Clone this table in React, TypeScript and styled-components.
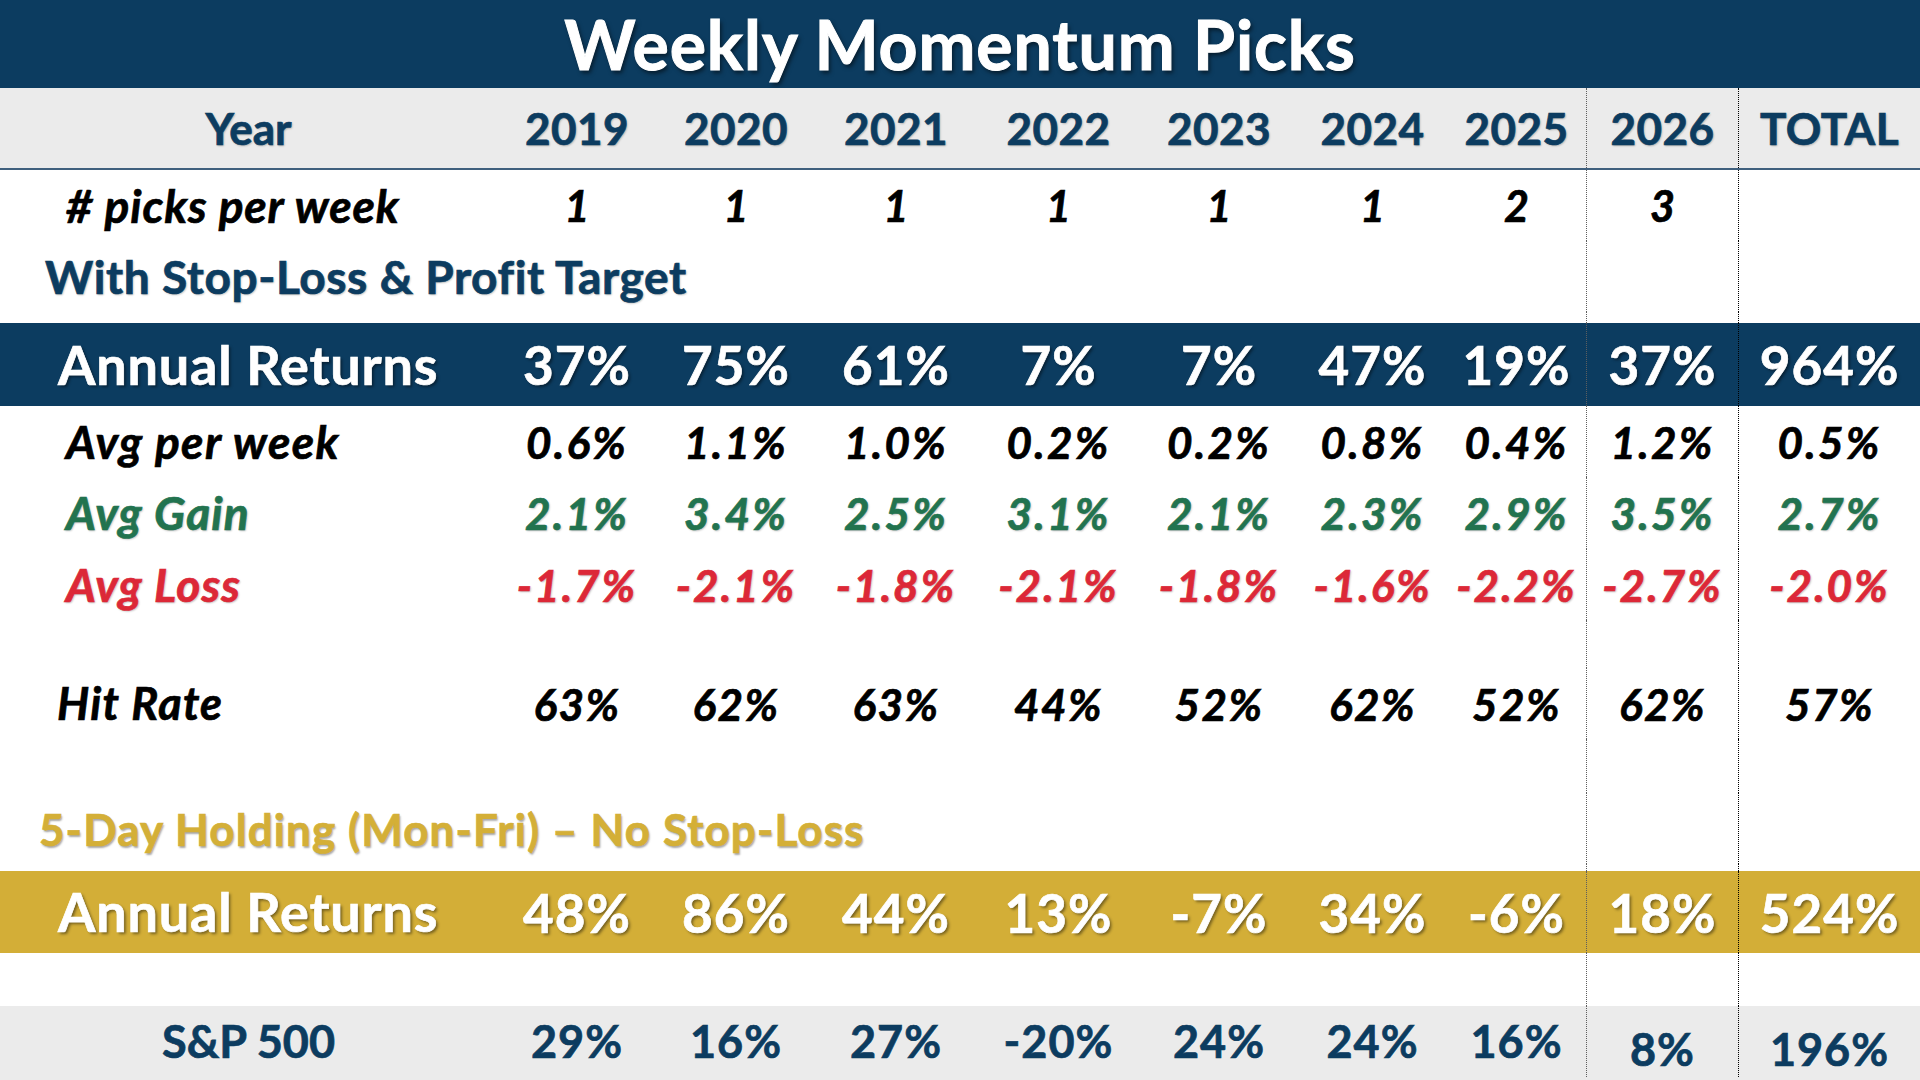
import React from 'react';
import styled, { createGlobalStyle } from 'styled-components';

const NAVY = '#0c3c60';
const GOLD = '#d3ae37';
const GREY = '#ebebeb';
const GREEN = '#22734f';
const RED = '#dc2837';

const COLS = '497px 160px 158px 162px 163px 158px 149px 139px 152px 182px';

const STRONG = '2px 2px 3px rgba(0,0,0,0.45)';
const SOFT = '1px 1px 2px rgba(0,0,0,0.28)';
const STROKE = '0.7px';

const GlobalStyle = createGlobalStyle`
  html, body { margin: 0; padding: 0; background: #ffffff; }
  body {
    font-family: Lato, "Open Sans", "Noto Sans", sans-serif;
    width: 1920px;
    height: 1080px;
    overflow: hidden;
  }
`;

const Page = styled.div`
  width: 1920px;
  height: 1080px;
  display: flex;
  flex-direction: column;
  background: #ffffff;
`;

const TitleBar = styled.h1`
  margin: 0;
  height: 88px;
  flex: 0 0 88px;
  background: ${NAVY};
  color: #ffffff;
  display: flex;
  align-items: center;
  justify-content: center;
  font-size: 68px;
  font-weight: 700;
  letter-spacing: 0.9px;
  -webkit-text-stroke: 1px #ffffff;
  line-height: 1;
  text-shadow: 2px 3px 4px rgba(0, 0, 0, 0.55);
`;

const Row = styled.div<{ $h: number; $bg?: string; $rule?: boolean; $padBottom?: number }>`
  display: grid;
  grid-template-columns: ${COLS};
  height: ${(p) => p.$h}px;
  flex: 0 0 ${(p) => p.$h}px;
  box-sizing: border-box;
  background: ${(p) => p.$bg ?? 'transparent'};
  border-bottom: ${(p) => (p.$rule ? '2px solid #3f5f7d' : 'none')};
  padding-bottom: ${(p) => p.$padBottom ?? 0}px;
`;

const Label = styled.div<{
  $size: number;
  $italic?: boolean;
  $color: string;
  $center?: boolean;
  $indent?: number;
  $shadow?: string;
  $ls?: number;
}>`
  display: flex;
  align-items: center;
  justify-content: ${(p) => (p.$center ? 'center' : 'flex-start')};
  padding-left: ${(p) => (p.$center ? 0 : p.$indent ?? 0)}px;
  white-space: nowrap;
  overflow: visible;
  font-size: ${(p) => p.$size}px;
  font-weight: 700;
  font-style: ${(p) => (p.$italic ? 'italic' : 'normal')};
  letter-spacing: ${(p) => p.$ls ?? 0}px;
  color: ${(p) => p.$color};
  -webkit-text-stroke: ${STROKE} ${(p) => p.$color};
  text-shadow: ${(p) => p.$shadow ?? 'none'};
  line-height: 1;
  position: relative;
  z-index: 1;
`;

type Divider = 'none' | 'grey' | 'black';

const Value = styled.div<{
  $size: number;
  $italic?: boolean;
  $color: string;
  $shadow?: string;
  $divider: Divider;
  $drop?: number;
  $ls?: number;
}>`
  display: flex;
  align-items: center;
  justify-content: center;
  box-sizing: border-box;
  padding-top: ${(p) => p.$drop ?? 0}px;
  border-left: ${(p) =>
    p.$divider === 'grey'
      ? '1px dotted #5e5e5e'
      : p.$divider === 'black'
      ? '1px dotted #000000'
      : 'none'};
  white-space: nowrap;
  font-size: ${(p) => p.$size}px;
  font-weight: 700;
  font-style: ${(p) => (p.$italic ? 'italic' : 'normal')};
  letter-spacing: ${(p) => p.$ls ?? 0}px;
  color: ${(p) => p.$color};
  -webkit-text-stroke: ${STROKE} ${(p) => p.$color};
  text-shadow: ${(p) => p.$shadow ?? 'none'};
  line-height: 1;
`;

interface TextStyle {
  size: number;
  italic?: boolean;
  color: string;
  shadow?: string;
  ls?: number;
}

interface RowSpec {
  key: string;
  h: number;
  bg?: string;
  rule?: boolean;
  padBottom?: number;
  label?: TextStyle & { text: string; center?: boolean; indent?: number };
  values?: string[];
  valueStyle?: TextStyle;
  drop?: number[];
}

const EMPTY = ['', '', '', '', '', '', '', '', ''];

const rows: RowSpec[] = [
  {
    key: 'year',
    h: 82,
    bg: GREY,
    rule: true,
    label: { text: 'Year', size: 44, color: NAVY, center: true, shadow: SOFT },
    values: ['2019', '2020', '2021', '2022', '2023', '2024', '2025', '2026', 'TOTAL'],
    valueStyle: { size: 44, color: NAVY, shadow: SOFT, ls: 0.5 },
  },
  {
    key: 'picks',
    h: 71,
    label: { text: '# picks per week', size: 46, italic: true, color: '#000', indent: 66, ls: 0.9 },
    values: ['1', '1', '1', '1', '1', '1', '2', '3', ''],
    valueStyle: { size: 43, italic: true, color: '#000' },
  },
  {
    key: 'section1',
    h: 71,
    label: {
      text: 'With Stop-Loss & Profit Target',
      size: 46,
      color: NAVY,
      indent: 45,
      shadow: SOFT,
      ls: 0.6,
    },
  },
  { key: 'gap1', h: 11 },
  {
    key: 'annual1',
    h: 83,
    bg: NAVY,
    label: { text: 'Annual Returns', size: 54, color: '#fff', indent: 58, shadow: STRONG, ls: 0.8 },
    values: ['37%', '75%', '61%', '7%', '7%', '47%', '19%', '37%', '964%'],
    valueStyle: { size: 53, color: '#fff', shadow: STRONG, ls: 1 },
  },
  {
    key: 'avgweek',
    h: 71,
    label: { text: 'Avg per week', size: 46, italic: true, color: '#000', indent: 66, ls: 1.4 },
    values: ['0.6%', '1.1%', '1.0%', '0.2%', '0.2%', '0.8%', '0.4%', '1.2%', '0.5%'],
    valueStyle: { size: 44, italic: true, color: '#000', ls: 2.2 },
  },
  {
    key: 'avggain',
    h: 72,
    label: { text: 'Avg Gain', size: 46, italic: true, color: GREEN, indent: 66, shadow: SOFT, ls: 1.2 },
    values: ['2.1%', '3.4%', '2.5%', '3.1%', '2.1%', '2.3%', '2.9%', '3.5%', '2.7%'],
    valueStyle: { size: 44, italic: true, color: GREEN, shadow: SOFT, ls: 2.2 },
  },
  {
    key: 'avgloss',
    h: 71,
    label: { text: 'Avg Loss', size: 46, italic: true, color: RED, indent: 66, shadow: SOFT, ls: 1.2 },
    values: ['-1.7%', '-2.1%', '-1.8%', '-2.1%', '-1.8%', '-1.6%', '-2.2%', '-2.7%', '-2.0%'],
    valueStyle: { size: 44, italic: true, color: RED, shadow: SOFT, ls: 2 },
  },
  { key: 'gap2', h: 48 },
  {
    key: 'hit',
    h: 71,
    label: { text: 'Hit Rate', size: 45, italic: true, color: '#000', indent: 57, ls: 1.2 },
    values: ['63%', '62%', '63%', '44%', '52%', '62%', '52%', '62%', '57%'],
    valueStyle: { size: 44, italic: true, color: '#000', ls: 1.5 },
  },
  { key: 'gap3', h: 54 },
  {
    key: 'section2',
    h: 71,
    label: {
      text: '5-Day Holding (Mon-Fri) \u2013 No Stop-Loss',
      size: 44,
      color: '#d4af37',
      indent: 39,
      shadow: '1px 2px 2px rgba(0,0,0,0.35)',
      ls: 1.1,
    },
  },
  { key: 'gap4', h: 7 },
  {
    key: 'annual2',
    h: 82,
    bg: GOLD,
    label: { text: 'Annual Returns', size: 54, color: '#fff', indent: 58, shadow: STRONG, ls: 0.8 },
    values: ['48%', '86%', '44%', '13%', '-7%', '34%', '-6%', '18%', '524%'],
    valueStyle: { size: 53, color: '#fff', shadow: STRONG, ls: 1 },
  },
  { key: 'gap5', h: 53 },
  {
    key: 'sp',
    h: 74,
    bg: GREY,
    padBottom: 3,
    label: { text: 'S&P 500', size: 45, color: NAVY, center: true },
    values: ['29%', '16%', '27%', '-20%', '24%', '24%', '16%', '8%', '196%'],
    valueStyle: { size: 45, color: NAVY, ls: 1 },
    drop: [7, 8],
  },
];

const dividerFor = (i: number): Divider => (i === 7 ? 'grey' : i === 8 ? 'black' : 'none');

const TableRow: React.FC<{ spec: RowSpec }> = ({ spec }) => {
  const values = spec.values ?? EMPTY;
  const vs: TextStyle = spec.valueStyle ?? { size: 44, color: '#000' };
  return (
    <Row $h={spec.h} $bg={spec.bg} $rule={spec.rule} $padBottom={spec.padBottom}>
      {spec.label ? (
        <Label
          $size={spec.label.size}
          $italic={spec.label.italic}
          $color={spec.label.color}
          $center={spec.label.center}
          $indent={spec.label.indent}
          $shadow={spec.label.shadow}
          $ls={spec.label.ls}
        >
          {spec.label.text}
        </Label>
      ) : (
        <Label $size={10} $color="#000" />
      )}
      {values.map((v, i) => (
        <Value
          key={i}
          $size={vs.size}
          $italic={vs.italic}
          $color={vs.color}
          $shadow={vs.shadow}
          $ls={vs.ls}
          $divider={dividerFor(i)}
          $drop={spec.drop && spec.drop.includes(i) ? 16 : 0}
        >
          {v}
        </Value>
      ))}
    </Row>
  );
};

export default function App() {
  return (
    <>
      <GlobalStyle />
      <Page>
        <TitleBar>Weekly Momentum Picks</TitleBar>
        {rows.map((r) => (
          <TableRow key={r.key} spec={r} />
        ))}
      </Page>
    </>
  );
}
